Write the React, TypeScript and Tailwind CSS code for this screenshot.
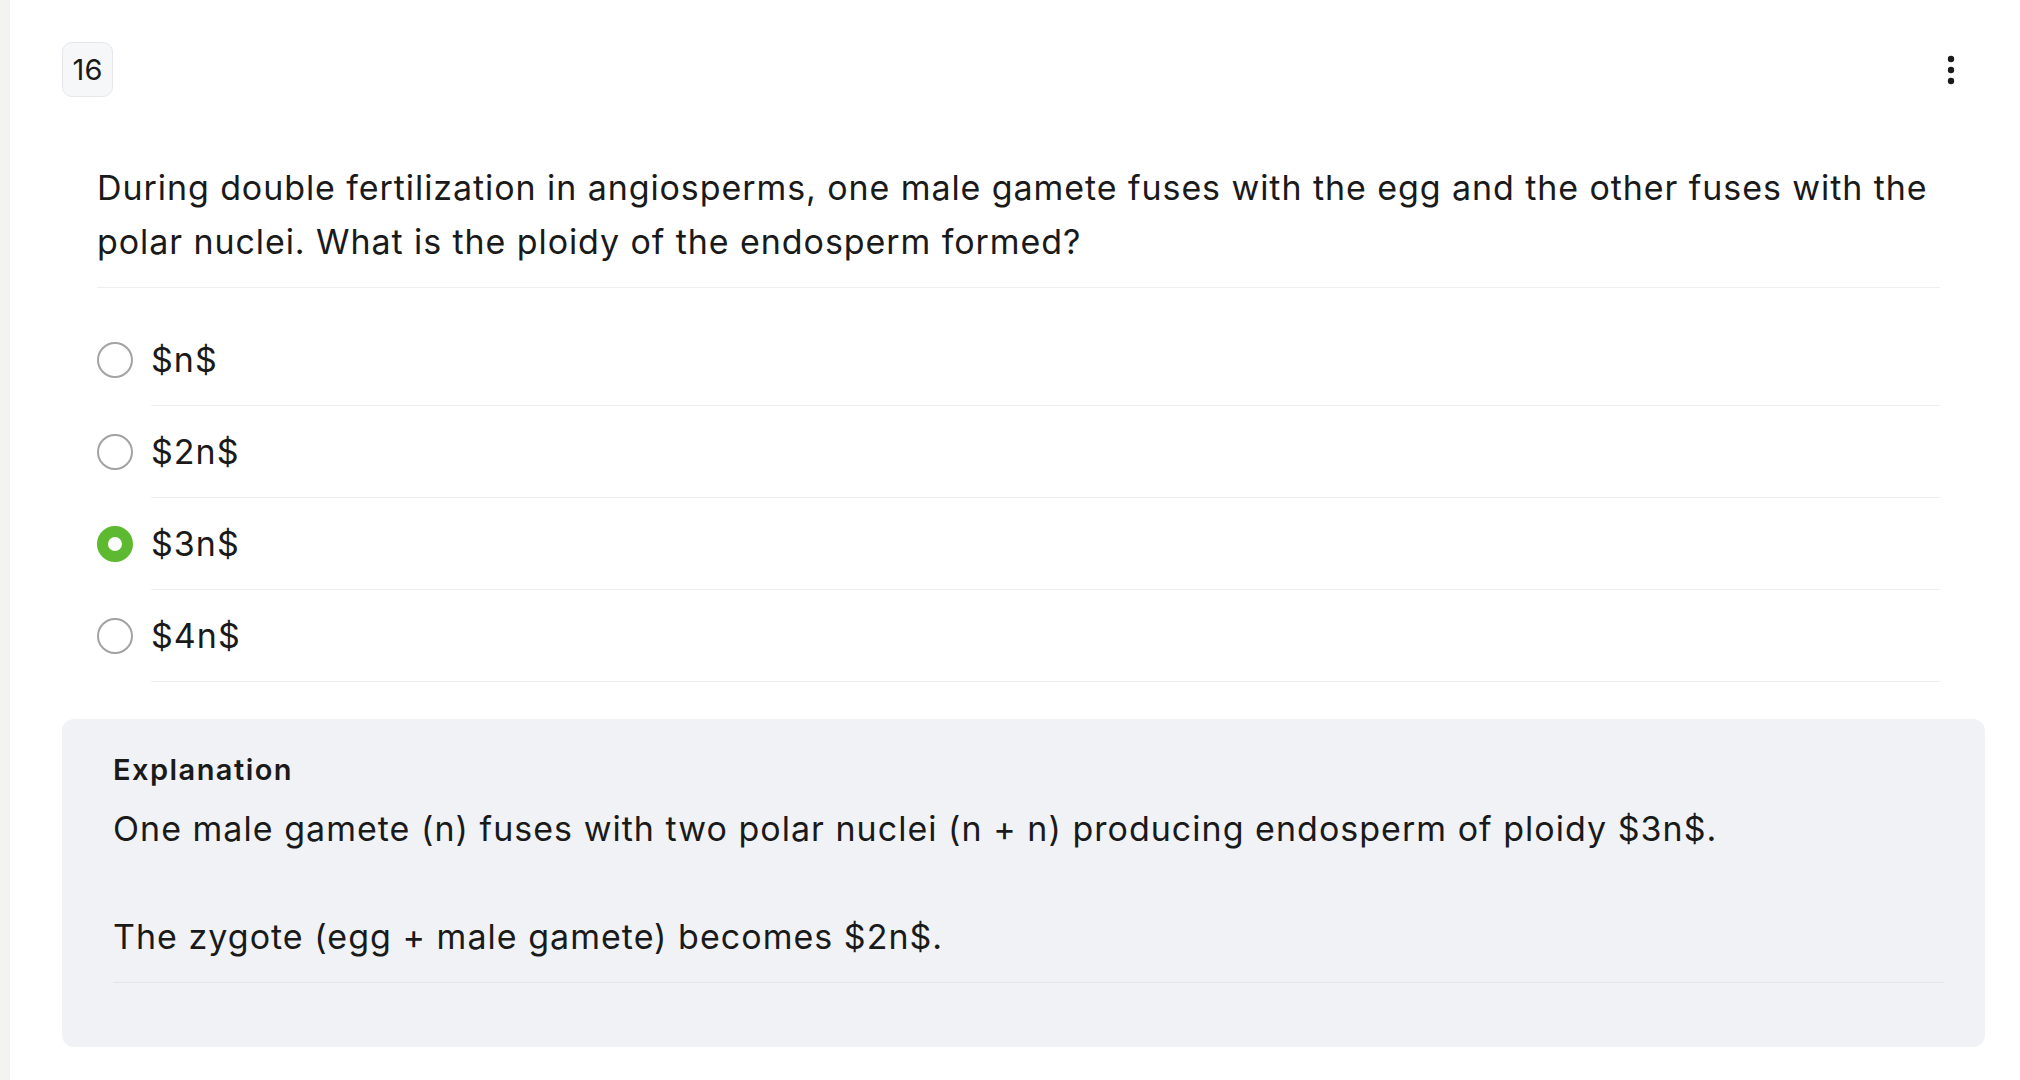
const options = [
  { id: 'a', label: '$n$', selected: false },
  { id: 'b', label: '$2n$', selected: false },
  { id: 'c', label: '$3n$', selected: true },
  { id: 'd', label: '$4n$', selected: false },
];

function Radio({ checked }: { checked: boolean }) {
  if (checked) {
    return <span className="block w-9 h-9 shrink-0 rounded-full border-[11px] border-[#5db92f] bg-white" />;
  }
  return <span className="block w-9 h-9 shrink-0 rounded-full border-2 border-[#a3a3a3] bg-white" />;
}

export default function App() {
  return (
    <div className="flex min-h-screen bg-white text-[#1a1a1a] font-['Inter','Noto_Sans',sans-serif]">
      <div className="w-[10px] shrink-0 bg-[#f3f3f1]" />
      <div className="flex-1 pl-[52px] pr-[35px] pt-[42px]">
        <div className="flex items-start justify-between">
          <div className="flex h-[55px] w-[51px] items-center justify-center rounded-[10px] border border-[#e4e7ec] bg-[#f6f7f9] text-[29px]">
            16
          </div>
          <button className="mt-[13px] mr-[30px]" aria-label="More">
            <svg width="8" height="30" viewBox="0 0 8 30" fill="#1a1a1a">
              <circle cx="4" cy="4" r="3.2" />
              <circle cx="4" cy="15" r="3.2" />
              <circle cx="4" cy="26" r="3.2" />
            </svg>
          </button>
        </div>

        <div className="pl-[35px] pr-[45px]">
          <p className="mt-[64px] mr-[-30px] text-[34px] leading-[54px] tracking-[0.027em]">
            During double fertilization in angiosperms, one male gamete fuses with the egg and the other fuses with the polar nuclei. What is the ploidy of the endosperm formed?
          </p>
          <div className="mt-[18px] h-px bg-[#eceef1]" />

          <div className="mt-[26px]">
            {options.map((o) => (
              <label key={o.id} className="flex items-center cursor-pointer">
                <Radio checked={o.selected} />
                <div className="ml-[18px] flex h-[92px] flex-1 items-center border-b border-[#eceef1] text-[34px] tracking-[0.03em]">
                  {o.label}
                </div>
              </label>
            ))}
          </div>
        </div>

        <div className="mt-[37px] rounded-xl bg-[#f0f2f6] pl-[51px] pr-[41px] pt-[33px] pb-[64px]">
          <div className="text-[29px] leading-[36px] font-semibold tracking-[0.05em]">Explanation</div>
          <p className="mt-[15px] text-[34px] leading-[52px] tracking-[0.03em]">
            One male gamete (n) fuses with two polar nuclei (n + n) producing endosperm of ploidy $3n$.
          </p>
          <p className="mt-[56px] text-[34px] leading-[52px] tracking-[0.03em]">The zygote (egg + male gamete) becomes $2n$.</p>
          <div className="mt-[19px] h-px bg-[#e2e6ec]" />
        </div>
      </div>
    </div>
  );
}
